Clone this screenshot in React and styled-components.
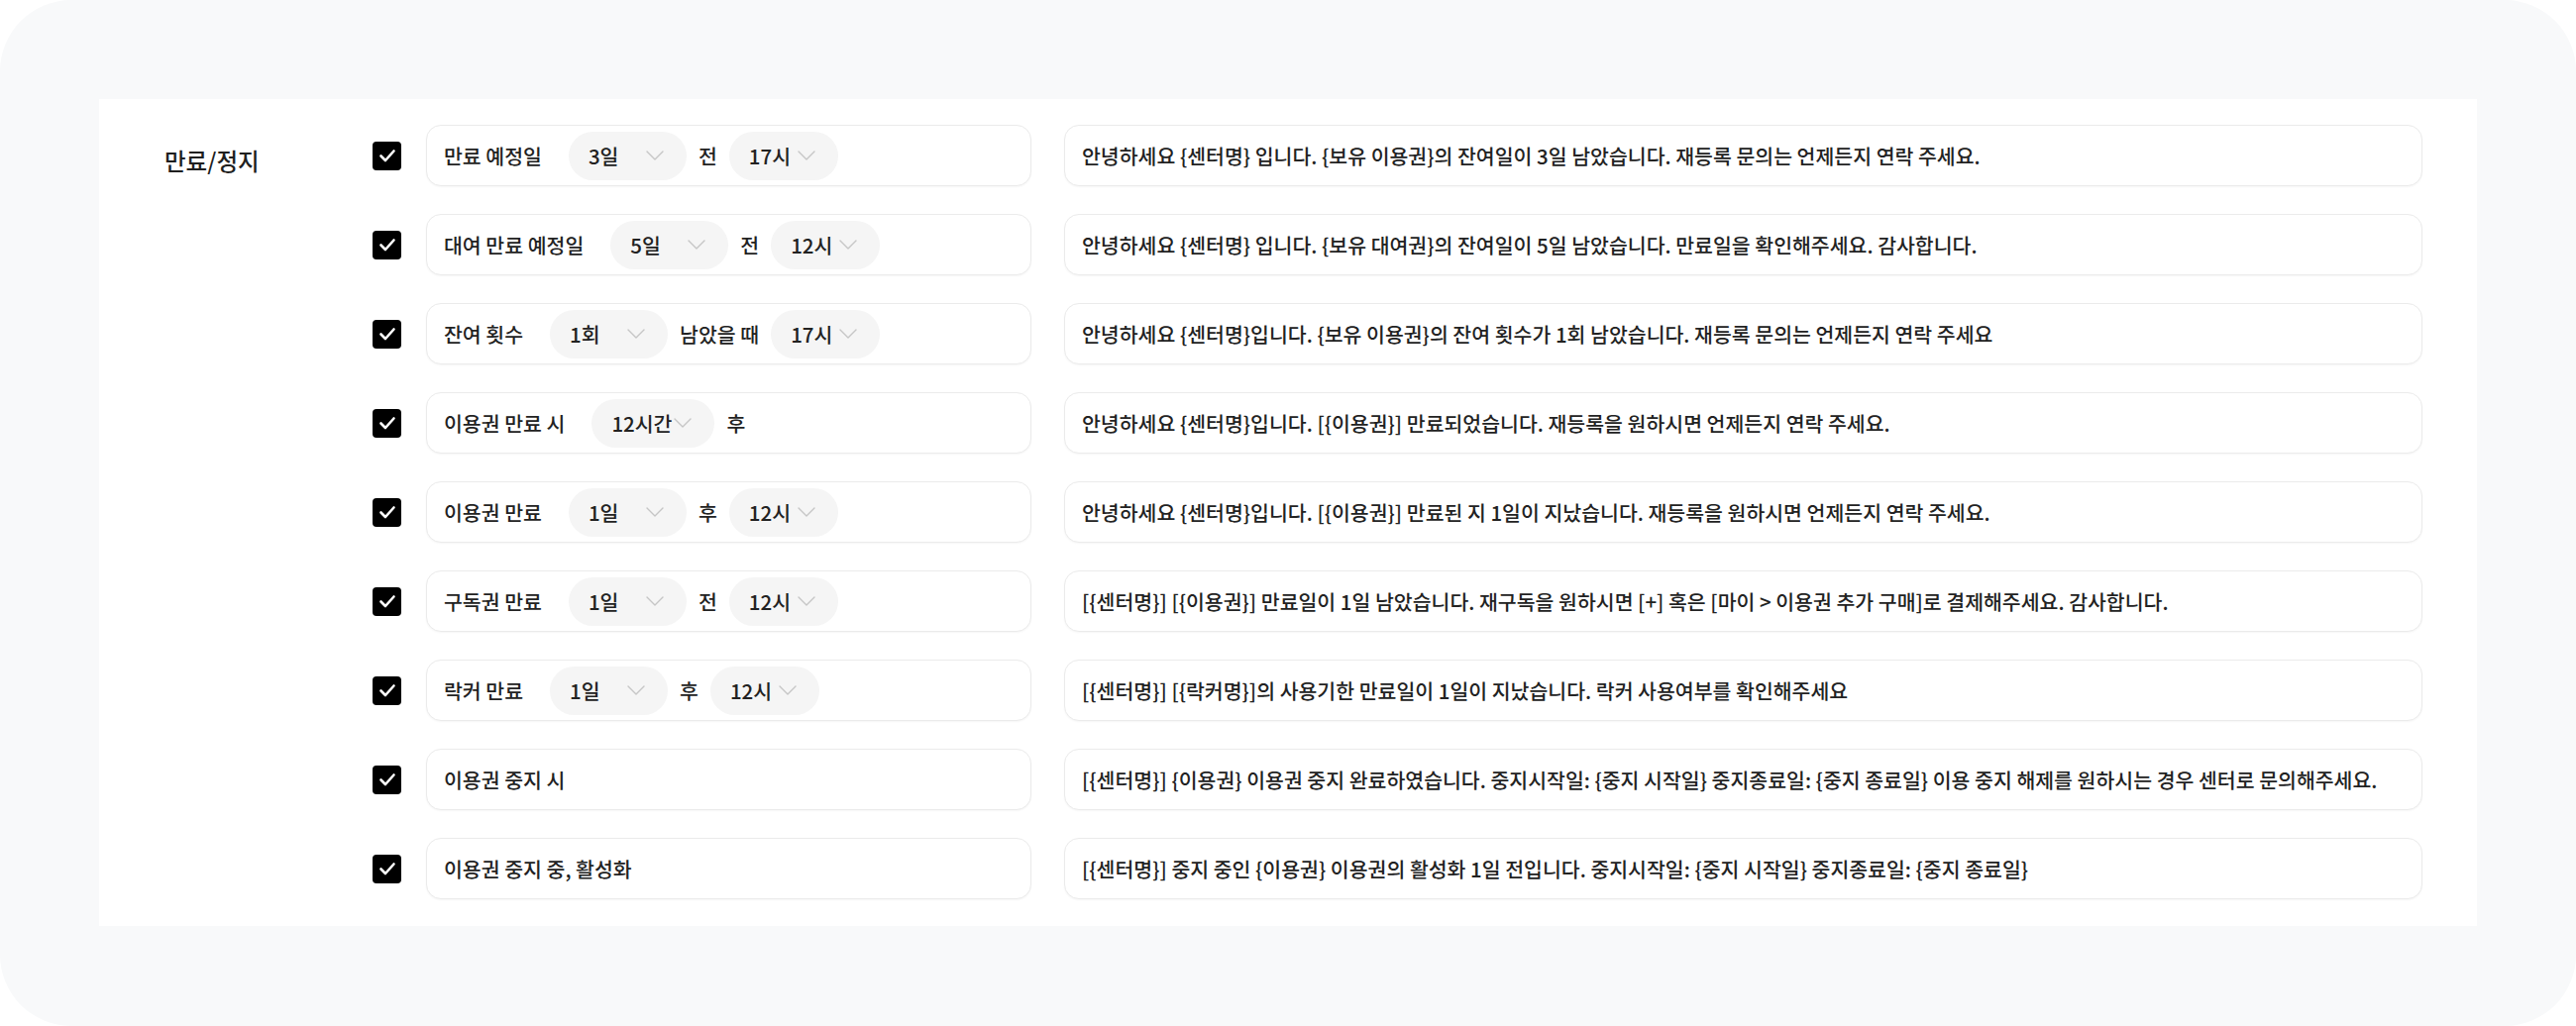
import React from "react";
import styled, { createGlobalStyle } from "styled-components";

const GlobalStyle = createGlobalStyle`
  html, body {
    margin: 0;
    padding: 0;
    background: #ffffff;
  }
  body {
    font-family: "Noto Sans CJK KR", "Noto Sans", sans-serif;
    color: #222222;
  }
`;

const Frame = styled.div`
  width: 2600px;
  height: 1036px;
  box-sizing: border-box;
  padding: 100px 100px 0;
  background-color: #f8f9fa;
  border-radius: 72px;
`;

const Card = styled.section`
  display: flex;
  background-color: #ffffff;
  padding: 26px 55px 27px 66px;
`;

const SectionTitle = styled.h3`
  width: 210px;
  flex-shrink: 0;
  margin: 0;
  padding-top: 20px;
  font-size: 23.5px;
  line-height: 32px;
  font-weight: 500;
  color: #1f1f1f;
`;

const RowList = styled.div`
  flex: 1;
  display: flex;
  flex-direction: column;
  gap: 28px;
`;

const Row = styled.div`
  display: flex;
  align-items: center;
  height: 62px;
`;

const CheckBox = styled.span`
  width: 29px;
  height: 29px;
  flex-shrink: 0;
  margin-right: 25px;
  border-radius: 4px;
  background-color: #000000;
  display: flex;
  align-items: center;
  justify-content: center;
`;

const Field = styled.div`
  display: flex;
  align-items: center;
  box-sizing: border-box;
  height: 62px;
  padding: 0 17px;
  border: 1px solid #ebebeb;
  border-radius: 15px;
  background-color: #ffffff;
  box-shadow: 0 1px 2px rgba(0, 0, 0, 0.04);
  font-size: 20.5px;
  font-weight: 500;
  color: #222222;
  white-space: nowrap;
`;

const Condition = styled(Field)`
  width: 611px;
  flex-shrink: 0;
  margin-right: 33px;
`;

const Message = styled(Field)`
  flex: 1;
`;

const Lead = styled.span`
  margin-right: 27px;
`;

const Word = styled.span`
  margin: 0 12px;
`;

const Select = styled.div`
  display: flex;
  align-items: center;
  justify-content: space-between;
  box-sizing: border-box;
  width: ${(props) => props.$width}px;
  height: 49px;
  padding: 0 23px 0 20px;
  border-radius: 25px;
  background-color: #f5f5f5;
  color: #222222;
`;

const Check = () => (
  <svg width="20" height="20" viewBox="0 0 20 20" fill="none">
    <path
      d="M3.5 10.5 L8 15 L16.5 5.5"
      stroke="#ffffff"
      strokeWidth="2.6"
      strokeLinecap="round"
      strokeLinejoin="round"
    />
  </svg>
);

const Chevron = () => (
  <svg width="18" height="10" viewBox="0 0 18 10" fill="none">
    <path
      d="M1 1 L9 9 L17 1"
      stroke="#c6c6c6"
      strokeWidth="1.4"
      strokeLinecap="round"
      strokeLinejoin="round"
    />
  </svg>
);

const widths = { day: 119, hour: 110, long: 124 };

const rows = [
  {
    parts: [
      { t: "lead", v: "만료 예정일" },
      { t: "select", v: "3일", w: "day" },
      { t: "word", v: "전" },
      { t: "select", v: "17시", w: "hour" },
    ],
    msg: "안녕하세요 {센터명} 입니다. {보유 이용권}의 잔여일이 3일 남았습니다. 재등록 문의는 언제든지 연락 주세요.",
  },
  {
    parts: [
      { t: "lead", v: "대여 만료 예정일" },
      { t: "select", v: "5일", w: "day" },
      { t: "word", v: "전" },
      { t: "select", v: "12시", w: "hour" },
    ],
    msg: "안녕하세요 {센터명} 입니다. {보유 대여권}의 잔여일이 5일 남았습니다. 만료일을 확인해주세요. 감사합니다.",
  },
  {
    parts: [
      { t: "lead", v: "잔여 횟수" },
      { t: "select", v: "1회", w: "day" },
      { t: "word", v: "남았을 때" },
      { t: "select", v: "17시", w: "hour" },
    ],
    msg: "안녕하세요 {센터명}입니다. {보유 이용권}의 잔여 횟수가 1회 남았습니다. 재등록 문의는 언제든지 연락 주세요",
  },
  {
    parts: [
      { t: "lead", v: "이용권 만료 시" },
      { t: "select", v: "12시간", w: "long" },
      { t: "word", v: "후" },
    ],
    msg: "안녕하세요 {센터명}입니다. [{이용권}] 만료되었습니다. 재등록을 원하시면 언제든지 연락 주세요.",
  },
  {
    parts: [
      { t: "lead", v: "이용권 만료" },
      { t: "select", v: "1일", w: "day" },
      { t: "word", v: "후" },
      { t: "select", v: "12시", w: "hour" },
    ],
    msg: "안녕하세요 {센터명}입니다. [{이용권}] 만료된 지 1일이 지났습니다. 재등록을 원하시면 언제든지 연락 주세요.",
  },
  {
    parts: [
      { t: "lead", v: "구독권 만료" },
      { t: "select", v: "1일", w: "day" },
      { t: "word", v: "전" },
      { t: "select", v: "12시", w: "hour" },
    ],
    msg: "[{센터명}] [{이용권}] 만료일이 1일 남았습니다. 재구독을 원하시면 [+] 혹은 [마이 > 이용권 추가 구매]로 결제해주세요. 감사합니다.",
  },
  {
    parts: [
      { t: "lead", v: "락커 만료" },
      { t: "select", v: "1일", w: "day" },
      { t: "word", v: "후" },
      { t: "select", v: "12시", w: "hour" },
    ],
    msg: "[{센터명}] [{락커명}]의 사용기한 만료일이 1일이 지났습니다. 락커 사용여부를 확인해주세요",
  },
  {
    parts: [{ t: "lead", v: "이용권 중지 시" }],
    msg: "[{센터명}] {이용권} 이용권 중지 완료하였습니다. 중지시작일: {중지 시작일} 중지종료일: {중지 종료일} 이용 중지 해제를 원하시는 경우 센터로 문의해주세요.",
  },
  {
    parts: [{ t: "lead", v: "이용권 중지 중, 활성화" }],
    msg: "[{센터명}] 중지 중인 {이용권} 이용권의 활성화 1일 전입니다. 중지시작일: {중지 시작일} 중지종료일: {중지 종료일}",
  },
];

const renderPart = (p, i) => {
  if (p.t === "lead") return <Lead key={i}>{p.v}</Lead>;
  if (p.t === "word") return <Word key={i}>{p.v}</Word>;
  return (
    <Select key={i} $width={widths[p.w]}>
      <span>{p.v}</span>
      <Chevron />
    </Select>
  );
};

const App = () => {
  return (
    <>
      <GlobalStyle />
      <Frame>
        <Card>
          <SectionTitle>만료/정지</SectionTitle>
          <RowList>
            {rows.map((row, i) => (
              <Row key={i}>
                <CheckBox>
                  <Check />
                </CheckBox>
                <Condition>{row.parts.map(renderPart)}</Condition>
                <Message>{row.msg}</Message>
              </Row>
            ))}
          </RowList>
        </Card>
      </Frame>
    </>
  );
};

export default App;
